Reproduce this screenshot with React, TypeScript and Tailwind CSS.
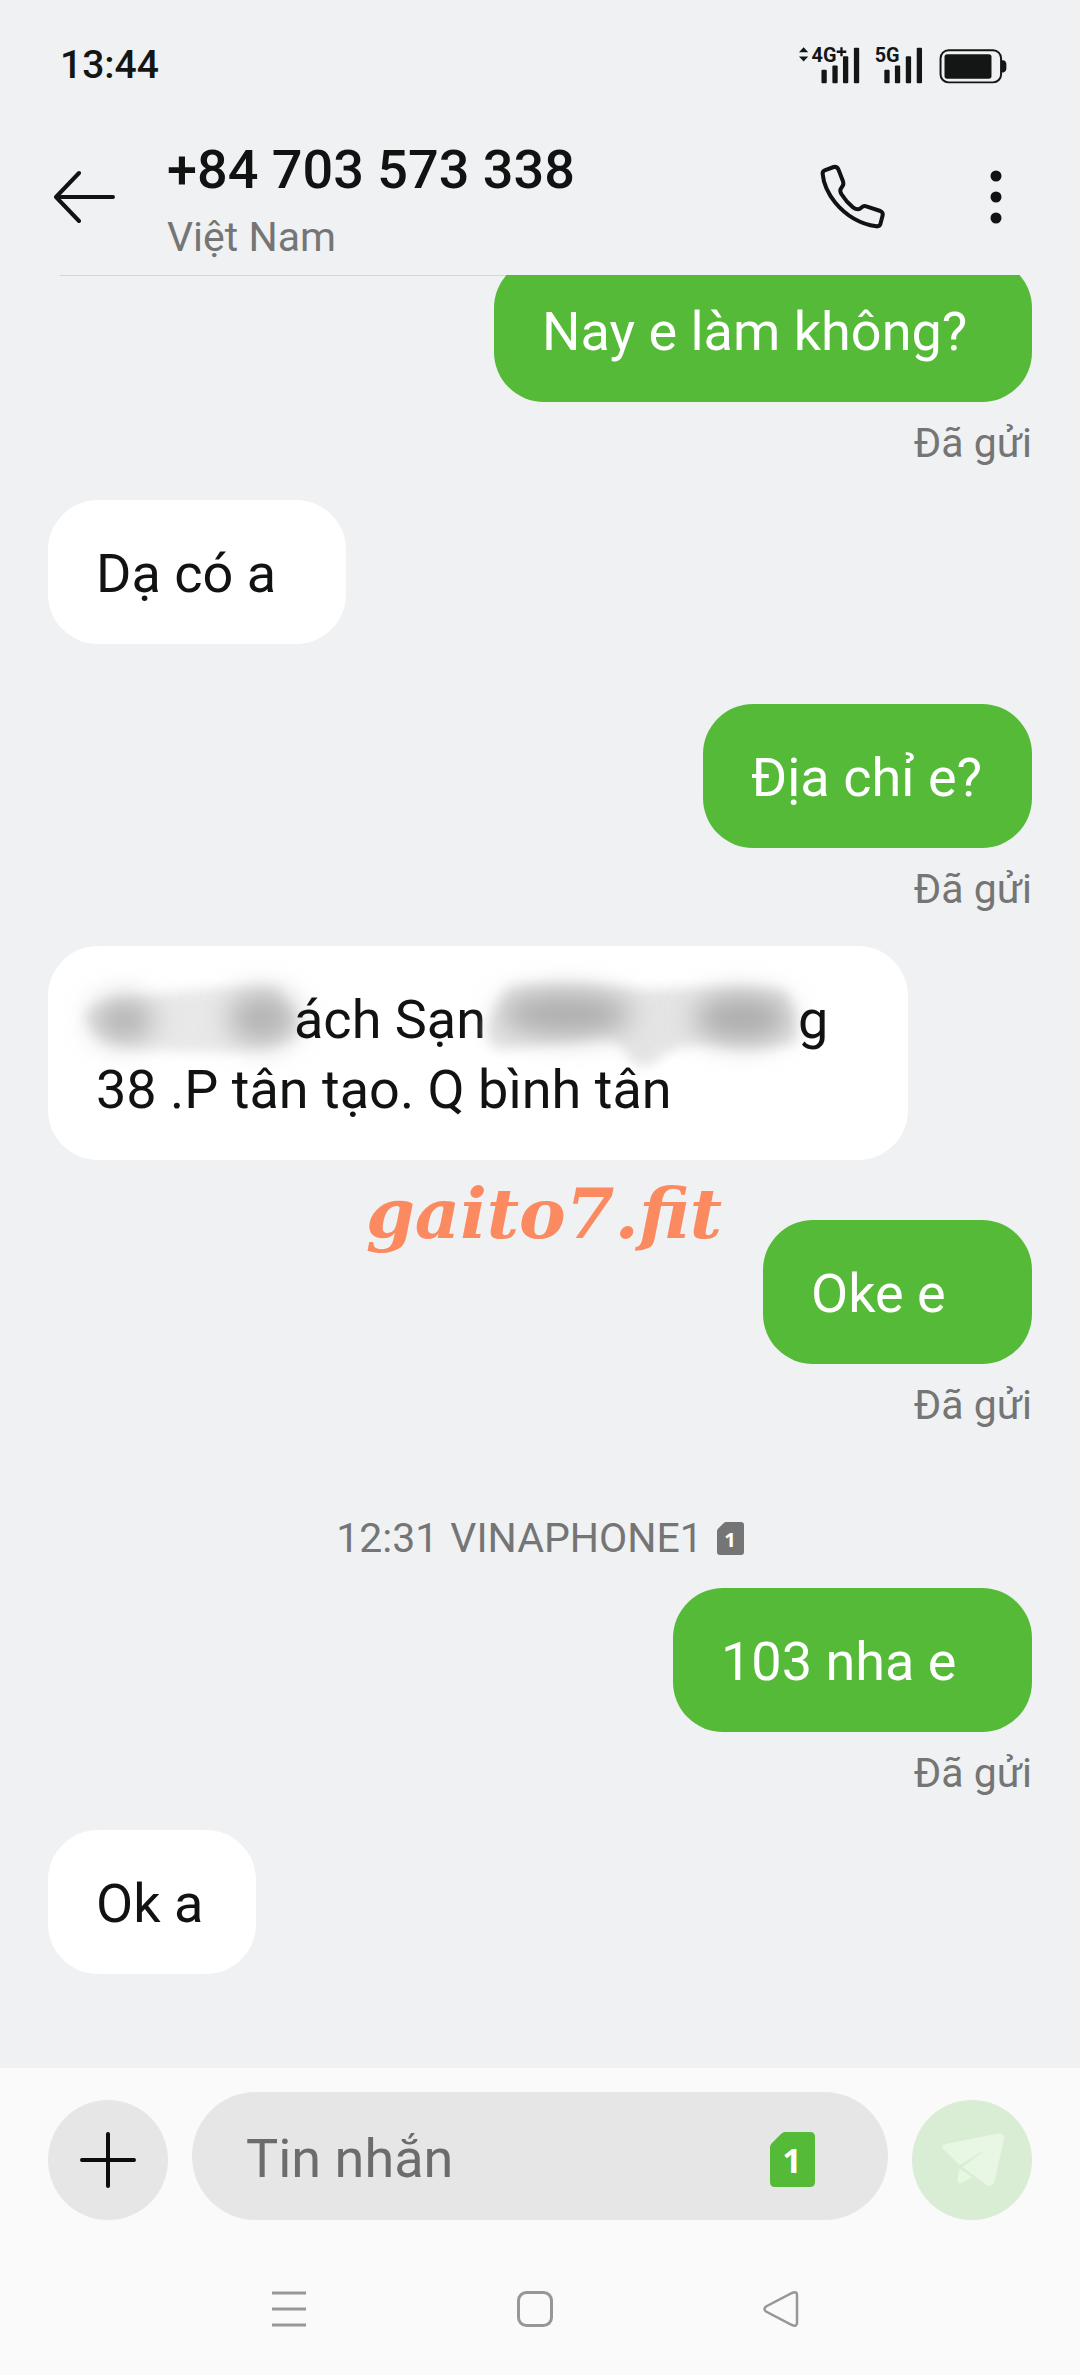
import type { ReactNode } from "react";

function StatusIcons() {
  return (
    <svg className="h-[43px] w-[213px]" viewBox="110 70 640 130" fill="#141616" aria-hidden="true">
      <path d="M128 80 L142 95 H114 Z M128 123 L142 108 H114 Z" />
      <text x="152" y="125" className="font-['Liberation_Sans_Narrow','Roboto',sans-serif] text-[60px] font-bold">4G</text>
      <path d="M239 80h7v10h11v7h-11v10h-7v-10h-11v-7h11z" />
      <rect x="182" y="148" width="16" height="41" rx="3" />
      <rect x="215" y="135" width="16" height="54" rx="3" />
      <rect x="247" y="107" width="16" height="82" rx="3" />
      <rect x="280" y="81" width="16" height="108" rx="3" />
      <text x="343" y="125" className="font-['Liberation_Sans_Narrow','Roboto',sans-serif] text-[60px] font-bold">5G</text>
      <rect x="372" y="148" width="16" height="41" rx="3" />
      <rect x="404" y="135" width="16" height="54" rx="3" />
      <rect x="437" y="107" width="16" height="82" rx="3" />
      <rect x="470" y="81" width="16" height="108" rx="3" />
      <rect x="542" y="89" width="183" height="97" rx="24" fill="none" stroke="#141616" strokeWidth="6" />
      <rect x="554" y="101" width="142" height="74" rx="8" />
      <path d="M727 119h5q9 3 9 12v13q0 9-9 12h-5z" />
    </svg>
  );
}

function SimIcon({ small = false }: { small?: boolean }) {
  return (
    <svg
      className={small ? "h-[33px] w-[27px]" : "h-[55px] w-[45px]"}
      viewBox="0 0 45 55"
      role="img"
      aria-label="SIM 1"
    >
      <path
        d="M15 0H40Q45 0 45 5V50Q45 55 40 55H5Q0 55 0 50V15Q0 13 2 11L11 2Q13 0 15 0Z"
        fill={small ? "#757575" : "#55ba37"}
      />
      <text x="22" y="41" textAnchor="middle" fontSize="34" fontWeight="700" fontFamily="'Open Sans', sans-serif" fill="#fff">
        1
      </text>
    </svg>
  );
}

function Sent({ children, width }: { children: ReactNode; width: string }) {
  return (
    <div className="flex flex-col items-end pb-8">
      <p className={`rounded-[50px] bg-[#55ba37] pt-[39px] pb-[35px] pl-12 text-[54px] leading-[70px] text-white ${width}`}>
        {children}
      </p>
      <span className="mt-4 text-[41px] leading-[50px] text-[#757575]">Đã gửi</span>
    </div>
  );
}

function Received({ children, width }: { children: ReactNode; width: string }) {
  return (
    <div className="flex pb-[60px]">
      <div className={`rounded-[50px] bg-white pt-[39px] pb-[35px] pl-12 text-[54px] leading-[70px] text-[#111313] ${width}`}>
        {children}
      </div>
    </div>
  );
}

function SmudgeLeft() {
  return (
    <svg className="h-[70px] w-[198px] shrink-0 overflow-visible" viewBox="96 985 198 70" aria-hidden="true">
      <defs>
        <filter id="soft" x="-20%" y="-30%" width="140%" height="160%">
          <feGaussianBlur stdDeviation="6" />
        </filter>
        <filter id="softer" x="-60%" y="-80%" width="220%" height="260%">
          <feGaussianBlur stdDeviation="14" />
        </filter>
      </defs>
      <path filter="url(#soft)" fill="#e8e8e8" d="M86 1012 Q98 1000 150 996 Q220 984 278 988 Q284 1004 296 1014 V1036 Q270 1050 220 1052 Q140 1052 108 1042 Q84 1030 86 1012Z" />
      <ellipse filter="url(#softer)" cx="124" cy="1020" rx="30" ry="22" fill="#b4b4b4" />
      <ellipse filter="url(#softer)" cx="262" cy="1018" rx="34" ry="26" fill="#b4b4b4" />
    </svg>
  );
}

function SmudgeRight() {
  return (
    <svg className="h-[70px] w-[312px] shrink-0 overflow-visible" viewBox="488 985 312 70" aria-hidden="true">
      <path filter="url(#soft)" fill="#e4e4e4" d="M510 987 Q570 980 650 990 Q720 984 786 990 Q798 1002 798 1042 Q770 1052 710 1044 Q672 1046 660 1060 Q645 1072 632 1060 Q620 1038 600 1038 L500 1050 Q484 1042 490 1022Z" />
      <ellipse filter="url(#softer)" cx="568" cy="1014" rx="66" ry="22" fill="#adadad" />
      <ellipse filter="url(#softer)" cx="744" cy="1018" rx="48" ry="24" fill="#adadad" />
    </svg>
  );
}

export default function App() {
  return (
    <div className="flex h-screen flex-col bg-[#eff1f3] font-['Roboto',sans-serif]">
      <div className="flex h-[130px] shrink-0 items-center justify-between pr-[70px] pl-[60px] text-[#141616]">
        <span className="text-[39px] leading-[48px] font-medium">13:44</span>
        <StatusIcons />
      </div>

      <header className="shrink-0">
        <div className="flex h-[134px] items-center pr-[60px] pl-[54px] text-[#111313]">
          <button type="button" aria-label="Quay lại">
            <svg className="h-[54px] w-[62px]" viewBox="0 0 62 54" fill="none" stroke="currentColor" strokeWidth="4" strokeLinecap="round" strokeLinejoin="round">
              <path d="M59 27H3M25 3L2 27L25 51" />
            </svg>
          </button>
          <div className="ml-[51px] flex-1 pt-1.5">
            <h1 className="text-[54px] leading-[64px] font-medium">+84 703 573 338</h1>
            <p className="mt-2.5 text-[41px] leading-[50px] text-[#757575]">Việt Nam</p>
          </div>
          <button type="button" aria-label="Gọi">
            <svg className="size-[70px]" viewBox="110 70 210 210" fill="none" stroke="currentColor" strokeWidth="12" strokeLinejoin="round">
              <path d="M133 95L160 85Q170 83 174 92L188 128Q191 137 186 143L181 151Q178 157 183 166Q198 190 218 206Q226 212 233 212Q238 212 243 207Q250 200 258 203L300 217Q309 221 307 230L300 257Q297 264 288 263Q215 252 165 192Q131 150 127 106Q126 98 133 95Z" />
            </svg>
          </button>
          <button type="button" aria-label="Tùy chọn khác" className="ml-[85px]">
            <svg className="h-[54px] w-12" viewBox="0 0 48 54" fill="currentColor">
              <circle cx="24" cy="6" r="5.500" />
              <circle cx="24" cy="27" r="5.500" />
              <circle cx="24" cy="48" r="5.500" />
            </svg>
          </button>
        </div>
        <div className="mx-[60px] mt-[11px] h-px bg-[#d3d5d7]" />
      </header>

      <main className="relative -mt-px flex min-h-0 flex-1 flex-col justify-end overflow-hidden px-12 pb-[34px]">
        <Sent width="w-[538px]">Nay e làm không?</Sent>
        <Received width="w-[298px]">Dạ có a</Received>
        <Sent width="w-[329px]">Địa chỉ e?</Sent>
        <div className="relative">
          <Received width="w-[860px]">
            <div className="flex whitespace-pre">
              <SmudgeLeft />
              <span>ách Sạn</span>
              <SmudgeRight />
              <span>g</span>
            </div>
            <div>38 .P tân tạo. Q bình tân</div>
          </Received>
          <div className="absolute bottom-1.5 left-1/2 -translate-x-1/2 translate-y-1/2 pl-2 font-['DejaVu_Serif',serif] text-[70px] leading-[90px] font-bold text-[#fb8a61] italic">
            gaito7.fit
          </div>
        </div>
        <Sent width="w-[269px]">Oke e</Sent>
        <div className="flex items-center justify-center pt-[51px] pb-[25px] text-[41px] leading-[50px] text-[#757575]">
          <span>12:31</span>
          <span className="mr-3.5 ml-3">VINAPHONE1</span>
          <SimIcon small />
        </div>
        <Sent width="w-[359px]">103 nha e</Sent>
        <Received width="w-[208px]">Ok a</Received>
      </main>

      <footer className="shrink-0 bg-[#fafafa]">
        <form className="flex items-end gap-6 px-12 pt-6" onSubmit={(e) => e.preventDefault()}>
          <button type="button" aria-label="Thêm" className="flex size-[120px] shrink-0 items-center justify-center rounded-full bg-[#e6e6e6] text-[#0c0c0c]">
            <svg className="size-14" viewBox="0 0 56 56" stroke="currentColor" strokeWidth="4" strokeLinecap="round">
              <path d="M2 28H54M28 2V54" />
            </svg>
          </button>
          <div className="flex h-32 min-w-0 flex-1 items-center rounded-full bg-[#e6e6e6] pt-1.5 pr-[73px] pl-[54px]">
            <input
              type="text"
              aria-label="Tin nhắn"
              placeholder="Tin nhắn"
              className="h-[70px] min-w-0 flex-1 bg-transparent text-[54px] leading-[70px] text-[#111313] outline-none placeholder:text-[#6c6c6c]"
            />
            <button type="button" aria-label="Chọn SIM">
              <SimIcon />
            </button>
          </div>
          <button type="submit" aria-label="Gửi" className="size-[120px] shrink-0 rounded-full bg-[#d8edd3]">
            <svg className="size-[120px]" viewBox="0 0 120 120" fill="#e7f7e4" stroke="#e7f7e4" strokeWidth="2" strokeLinejoin="round">
              <path d="M31.500 48Q30.500 46 34 45L86 34.500Q92 34 91 39L81 83Q79 86 75 84L52 67L71.500 52.500Q73 49 69 51L48 64L46 62Z" />
              <path d="M48 70L58.500 77L49 82Q46 83 46.500 80Z" />
            </svg>
          </button>
        </form>
        <nav className="flex justify-center gap-[210px] pt-[71px] pr-2.5 pb-12 text-[#979797]">
          <button type="button" aria-label="Ứng dụng gần đây">
            <svg className="size-9" viewBox="0 0 36 36" stroke="currentColor" strokeWidth="3">
              <path d="M1 2H35M1 18H35M1 34H35" />
            </svg>
          </button>
          <button type="button" aria-label="Màn hình chính">
            <svg className="size-9" viewBox="0 0 36 36" fill="none" stroke="currentColor" strokeWidth="3">
              <rect x="1.500" y="1.500" width="33" height="33" rx="8" />
            </svg>
          </button>
          <button type="button" aria-label="Trở về">
            <svg className="size-9" viewBox="0 0 36 36" fill="none" stroke="currentColor" strokeWidth="2.500">
              <path d="M3 15.500L29 2Q34 0 34 4V32Q34 36 29 34L3 20.500Q0 18 3 15.500Z" />
            </svg>
          </button>
        </nav>
      </footer>
    </div>
  );
}
